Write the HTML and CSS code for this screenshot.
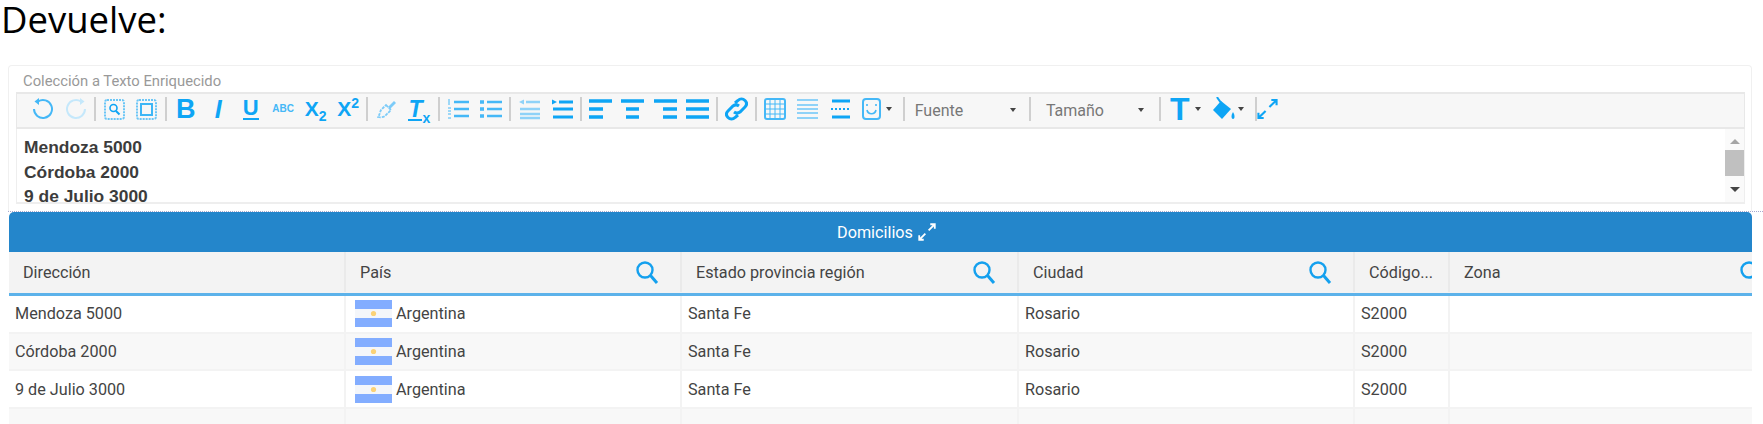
FILE: index.html
```html
<!DOCTYPE html>
<html>
<head lang="es">
    <meta charset="UTF-8">
    <title>Devuelve</title>
    <link rel="stylesheet" href="styles.css">
</head>
<body>
<svg class="defs" width="0" height="0">
    <symbol id="lupa" viewBox="0 0 24 24">
        <circle cx="10" cy="10" r="7.5" fill="none" stroke="currentColor" stroke-width="2.4"/>
        <path d="M15.5 15.5L22 23" fill="none" stroke="currentColor" stroke-width="3"/>
    </symbol>
    <symbol id="expand" viewBox="0 0 22 22">
        <path d="M13 9L20 2M15 1.500H20.500V7M9 13L2 20M1.500 15V20.500H7" fill="none" stroke="currentColor" stroke-width="2.200"/>
    </symbol>
    <symbol id="bandera" viewBox="0 0 37 27">
        <rect width="37" height="27" fill="#f4f6fa"/>
        <rect width="37" height="9" fill="#83adff"/>
        <rect y="18" width="37" height="9" fill="#83adff"/>
        <circle cx="18.500" cy="13.500" r="2.600" fill="#fbd277"/>
    </symbol>
</svg>

<h1 class="titulo">Devuelve:</h1>

<div class="card">
    <div class="card-label">Colección a Texto Enriquecido</div>
    <div class="toolbar">
        <span class="tb light2"><svg width="22" height="24" viewBox="0 0 22 24"><path d="M6 4.500A9 9 0 1 1 2 12" fill="none" stroke="currentColor" stroke-width="2"/><path d="M7 1L2.500 4.500L7 8z" fill="currentColor"/></svg></span>
        <span class="tb off"><svg width="22" height="24" viewBox="0 0 22 24"><path d="M16 4.500A9 9 0 1 0 20 12" fill="none" stroke="currentColor" stroke-width="2"/><path d="M15 1L19.500 4.500L15 8z" fill="currentColor"/></svg></span>
        <i class="sep"></i>
        <span class="tb"><svg width="21" height="21" viewBox="0 0 21 21"><rect x="1" y="1" width="19" height="19" rx="2" fill="none" stroke="currentColor" stroke-width="2" stroke-dasharray="2 1" opacity=".6"/><circle cx="9.500" cy="9" r="3.500" fill="none" stroke="currentColor" stroke-width="1.600"/><path d="M12 12l3.500 3.500" stroke="currentColor" stroke-width="2"/></svg></span>
        <span class="tb"><svg width="21" height="21" viewBox="0 0 21 21"><rect x="1" y="1" width="19" height="19" rx="2" fill="none" stroke="currentColor" stroke-width="2" stroke-dasharray="2 1" opacity=".6"/><rect x="5" y="5" width="11" height="11" fill="none" stroke="currentColor" stroke-width="2" opacity=".8"/></svg></span>
        <i class="sep"></i>
        <span class="tb"><b class="g-b">B</b></span>
        <span class="tb"><b class="g-i">I</b></span>
        <span class="tb"><b class="g-u">U</b></span>
        <span class="tb light2"><b class="g-abc">ABC</b></span>
        <span class="tb"><b class="g-x">X<sub>2</sub></b></span>
        <span class="tb"><b class="g-x">X<sup>2</sup></b></span>
        <i class="sep"></i>
        <span class="tb light"><svg width="20" height="20" viewBox="0 0 20 20"><path d="M9 6L14 11L8 17C6 18.500 3 18.500 1 18C3 15 3 13 4 11z" fill="none" stroke="currentColor" stroke-width="1.800" stroke-dasharray="3 1"/><path d="M11 8L17 2L19 4L13 10z" fill="currentColor"/></svg></span>
        <span class="tb"><b class="g-tx"><span class="g-tx-t">T</span><sub>x</sub></b></span>
        <i class="sep"></i>
        <span class="tb light2"><svg width="22" height="22" viewBox="0 0 22 22"><path d="M7 4H22M7 11H22M7 18H22" stroke="currentColor" stroke-width="2.400"/><path d="M2 1V7M1 10H4M1 13H4M1 16H4M1 20H4" stroke="currentColor" stroke-width="1"/></svg></span>
        <span class="tb light2"><svg width="22" height="22" viewBox="0 0 22 22"><path d="M7 4H22M7 11H22M7 18H22" stroke="currentColor" stroke-width="2.400"/><path d="M0 4H4M0 11H4M0 18H4" stroke="currentColor" stroke-width="3.600"/></svg></span>
        <i class="sep"></i>
        <span class="tb off2"><svg width="22" height="22" viewBox="0 0 22 22"><path d="M8 4H22M2 11H22M2 16H22M2 20H22" stroke="currentColor" stroke-width="2.400"/><path d="M6 1.500L1 4L6 6.500z" fill="currentColor"/></svg></span>
        <span class="tb"><svg width="22" height="22" viewBox="0 0 22 22"><path d="M8 4H22M2 11H22M2 19H22" stroke="currentColor" stroke-width="3.200"/><path d="M1 1.500L6 4L1 6.500z" fill="currentColor"/></svg></span>
        <i class="sep"></i>
        <span class="tb"><svg width="23" height="22" viewBox="0 0 23 22"><path d="M0 3H23M0 11H14M0 19H14" stroke="currentColor" stroke-width="3.600"/></svg></span>
        <span class="tb"><svg width="23" height="22" viewBox="0 0 23 22"><path d="M0 3H23M5 11H18M5 19H18" stroke="currentColor" stroke-width="3.600"/></svg></span>
        <span class="tb"><svg width="23" height="22" viewBox="0 0 23 22"><path d="M0 3H23M9 11H23M9 19H23" stroke="currentColor" stroke-width="3.600"/></svg></span>
        <span class="tb"><svg width="23" height="22" viewBox="0 0 23 22"><path d="M0 3H23M0 11H23M0 19H23" stroke="currentColor" stroke-width="3.600"/></svg></span>
        <i class="sep"></i>
        <span class="tb"><svg width="23" height="24" viewBox="0 0 23 24"><path d="M10 6L13 3.500C15 1.500 18 1.500 20 3.500C22 5.500 22 8 20 10L15 15C13 16.500 11 16.500 9 15" fill="none" stroke="currentColor" stroke-width="3"/><path d="M13 18L10 20.500C8 22.500 5 22.500 3 20.500C1 18.500 1 16 3 14L8 9C10 7.500 12 7.500 14 9" fill="none" stroke="currentColor" stroke-width="3"/></svg></span>
        <i class="sep"></i>
        <span class="tb light2"><svg width="22" height="22" viewBox="0 0 22 22"><rect x="1" y="1" width="20" height="20" rx="2" fill="none" stroke="currentColor" stroke-width="2"/><path d="M6 1V21M11 1V21M16 1V21M1 6H21M1 11H21M1 16H21" stroke="currentColor" stroke-width="1"/></svg></span>
        <span class="tb off2"><svg width="21" height="22" viewBox="0 0 21 22"><path d="M0 2H21M0 7H21M0 11H21M0 15H21M0 20H21" stroke="currentColor" stroke-width="2"/></svg></span>
        <span class="tb"><svg width="21" height="22" viewBox="0 0 21 22"><path d="M2 3H20M2 19H20" stroke="currentColor" stroke-width="3"/><path d="M1 11H20" stroke="currentColor" stroke-width="2" stroke-dasharray="2 2"/></svg></span>
        <span class="tb tb-wide"><svg class="light2" width="19" height="22" viewBox="0 0 19 22"><rect x="1" y="1" width="17" height="20" rx="3" fill="none" stroke="currentColor" stroke-width="2"/><path d="M5 6v2M14 6v2" stroke="currentColor" stroke-width="1.600"/><path d="M5 12C6 17 13 17 14 12" fill="none" stroke="currentColor" stroke-width="1.600"/></svg><u class="caret"></u></span>
        <i class="sep"></i>
        <span class="tb-select fuente">Fuente<u class="caret"></u></span>
        <i class="sep"></i>
        <span class="tb-select tamano">Tamaño<u class="caret"></u></span>
        <i class="sep"></i>
        <span class="tb tb-t"><b class="g-t">T</b><u class="caret"></u></span>
        <span class="tb tb-fill"><svg width="24" height="24" viewBox="0 0 24 24"><path d="M8 4L18 12L9 22L0 13z" fill="currentColor"/><path d="M4 0C5 2 7 4 9 7" fill="none" stroke="currentColor" stroke-width="2"/><path d="M20 15C18 18 18 22 20 22C22 22 22 18 20 15z" fill="currentColor"/></svg><u class="caret"></u></span>
        <i class="sep sep-last"></i>
        <span class="tb-arrows"><svg width="21" height="22"><use href="#expand"/></svg></span>
    </div>
    <div class="editor">
        <div class="editor-text">
            <p>Mendoza 5000</p>
            <p>Córdoba 2000</p>
            <p>9 de Julio 3000</p>
        </div>
        <div class="scroll">
            <u class="scroll-up"></u>
            <div class="scroll-thumb"></div>
            <u class="scroll-down"></u>
        </div>
    </div>
</div>

<div class="puntos"></div>

<div class="grilla">
    <div class="grilla-title">Domicilios <svg class="grilla-expand" width="18" height="18"><use href="#expand"/></svg></div>
    <div class="fila head">
        <div class="th">Dirección</div>
        <div class="th">País<svg class="lupa" width="24" height="24"><use href="#lupa"/></svg></div>
        <div class="th">Estado provincia región<svg class="lupa" width="24" height="24"><use href="#lupa"/></svg></div>
        <div class="th">Ciudad<svg class="lupa" width="24" height="24"><use href="#lupa"/></svg></div>
        <div class="th">Código...</div>
        <div class="th">Zona<svg class="lupa" width="24" height="24"><use href="#lupa"/></svg></div>
    </div>
    <div class="fila">
        <div class="td">Mendoza 5000</div>
        <div class="td td-pais"><svg width="37" height="27"><use href="#bandera"/></svg>Argentina</div>
        <div class="td">Santa Fe</div>
        <div class="td">Rosario</div>
        <div class="td">S2000</div>
        <div class="td"></div>
    </div>
    <div class="fila par">
        <div class="td">Córdoba 2000</div>
        <div class="td td-pais"><svg width="37" height="27"><use href="#bandera"/></svg>Argentina</div>
        <div class="td">Santa Fe</div>
        <div class="td">Rosario</div>
        <div class="td">S2000</div>
        <div class="td"></div>
    </div>
    <div class="fila">
        <div class="td">9 de Julio 3000</div>
        <div class="td td-pais"><svg width="37" height="27"><use href="#bandera"/></svg>Argentina</div>
        <div class="td">Santa Fe</div>
        <div class="td">Rosario</div>
        <div class="td">S2000</div>
        <div class="td"></div>
    </div>
    <div class="fila par">
        <div class="td"></div>
        <div class="td"></div>
        <div class="td"></div>
        <div class="td"></div>
        <div class="td"></div>
        <div class="td"></div>
    </div>
</div>
</body>
</html>
```

FILE: styles.css
```css
*{
    margin: 0;
    padding: 0;
    box-sizing: border-box;
}
html, body{
    height: 424px;
    overflow: hidden;
}
body{
    background: #ffffff;
    font-family: Roboto, "Liberation Sans", sans-serif;
    color: #444444;
}
.defs{
    position: absolute;
}
.titulo{
    height: 65px;
    padding-left: 1px;
    font-family: "Open Sans", sans-serif;
    font-size: 36.500px;
    font-weight: 400;
    line-height: 38px;
    color: #000000;
}

/* editor */
.card{
    width: 1744px;
    height: 146px;
    margin-left: 8px;
    padding: 5px 7px 0;
    border: 1px solid #f0f0f0;
    border-bottom: 0;
    border-radius: 4px 4px 0 0;
}
.card-label{
    height: 21px;
    padding-left: 7px;
    font-size: 14.800px;
    line-height: 20px;
    color: #999999;
}
.toolbar{
    display: flex;
    align-items: center;
    width: 1729px;
    height: 37px;
    padding: 0 0 3px 10px;
    background: #f7f7f7;
    border: 1px solid #e8e8e8;
    border-width: 2px 1px;
    color: #0ea5f5;
}
.tb{
    display: flex;
    align-items: center;
    justify-content: center;
    flex: none;
    width: 32.500px;
    height: 24px;
}
.tb b{
    font-family: "Liberation Sans", sans-serif;
    font-weight: 700;
    line-height: 24px;
}
.off{
    color: #c5e8fb;
}
.off2{
    color: #8fd2f8;
}
.light{
    color: #7ccbf8;
}
.light2{
    color: #45b8f7;
}
.sep{
    display: block;
    flex: none;
    width: 2px;
    height: 24px;
    margin: 0 2.100px;
    background: #cfcfcf;
}
.g-b{
    font-size: 27px;
}
.g-i{
    font-size: 25px;
    font-style: italic;
}
.g-u{
    font-size: 22px;
    line-height: 20px !important;
    border-bottom: 2px solid currentColor;
}
.g-abc{
    font-size: 10px;
}
.g-x{
    font-size: 21px;
}
.g-x sub, .g-x sup, .g-tx sub{
    font-size: 14px;
    line-height: 0;
}
.g-tx{
    font-size: 23px;
    font-style: italic;
}
.g-tx-t{
    display: inline-block;
    line-height: 20px;
    border-bottom: 2px solid currentColor;
}
.g-tx sub{
    font-style: normal;
}
.g-t{
    font-size: 32px;
}
.tb-wide{
    width: 44px;
    justify-content: flex-start;
    padding-left: 5px;
}
.caret{
    display: block;
    flex: none;
    width: 0;
    height: 0;
    margin-left: 5px;
    border: 3.500px solid transparent;
    border-top: 4px solid #444444;
    border-bottom: 0;
}
.tb-select{
    display: flex;
    align-items: center;
    justify-content: space-between;
    flex: none;
    height: 24px;
    margin-top: 2px;
    font-size: 16px;
    color: #777777;
}
.fuente{
    width: 120px;
    padding: 0 11px 0 8px;
}
.tamano{
    width: 124px;
    padding: 0 13px 0 13px;
}
.tb-t{
    justify-content: flex-start;
    width: 48px;
    padding-left: 7px;
}
.tb-fill{
    justify-content: flex-start;
    width: 42px;
    padding-left: 2px;
}
.tb-fill .caret{
    margin-left: 1px;
}
.sep-last{
    margin-right: 0;
}
.tb-arrows{
    display: block;
    height: 22px;
}
.editor{
    display: flex;
    width: 1729px;
    height: 75px;
    border: 1px solid #eeeeee;
    border-top: 0;
    border-bottom-width: 2px;
}
.editor-text{
    flex: 1;
    padding: 6px 0 0 7px;
    overflow: hidden;
    font-family: "Liberation Sans", sans-serif;
    font-size: 17.400px;
    font-weight: 700;
    line-height: 24.500px;
    color: #3c3c3c;
}
.scroll{
    display: flex;
    flex-direction: column;
    align-items: center;
    flex: none;
    width: 19px;
    background: #fafafa;
}
.scroll-up{
    display: block;
    margin: 10px 0 6px;
    border: 5px solid transparent;
    border-bottom: 5px solid #a5a5a5;
    border-top: 0;
}
.scroll-thumb{
    width: 19px;
    height: 26px;
    background: #c0c0c0;
}
.scroll-down{
    display: block;
    margin-top: 11px;
    border: 5px solid transparent;
    border-top: 5px solid #444444;
    border-bottom: 0;
}
.puntos{
    height: 1px;
    margin-left: 8px;
    border-top: 1px dotted #a9a9cf;
}

/* grilla */
.grilla{
    width: 1743px;
    height: 212px;
    margin-left: 9px;
    overflow: hidden;
    border-radius: 5px 5px 0 0;
    font-size: 16.200px;
}
.grilla-title{
    display: flex;
    align-items: center;
    justify-content: center;
    gap: 5px;
    height: 40px;
    padding-left: 12px;
    background: #2486cb;
    color: #ffffff;
}
.fila{
    display: grid;
    grid-template-columns: 337px 336px 337px 336px 95px 336px;
    width: 1777px;
    height: 37.700px;
    background: #ffffff;
    border-bottom: 2px solid #f3f3f3;
}
.par{
    background: #f8f8f8;
}
.head{
    height: 44px;
    padding-bottom: 1px;
    background: #f3f3f3;
    border-bottom: 3px solid #5cb2ea;
}
.th{
    display: flex;
    align-items: center;
    justify-content: space-between;
    padding: 0 21px 0 14px;
    border-right: 2px solid #eaeaea;
    white-space: nowrap;
}
.lupa{
    flex: none;
    color: #14a0ee;
}
.td{
    display: flex;
    align-items: center;
    padding-left: 6px;
    border-right: 2px solid #f3f3f3;
    white-space: nowrap;
}
.td-pais{
    gap: 4px;
    padding-left: 9px;
}
```
